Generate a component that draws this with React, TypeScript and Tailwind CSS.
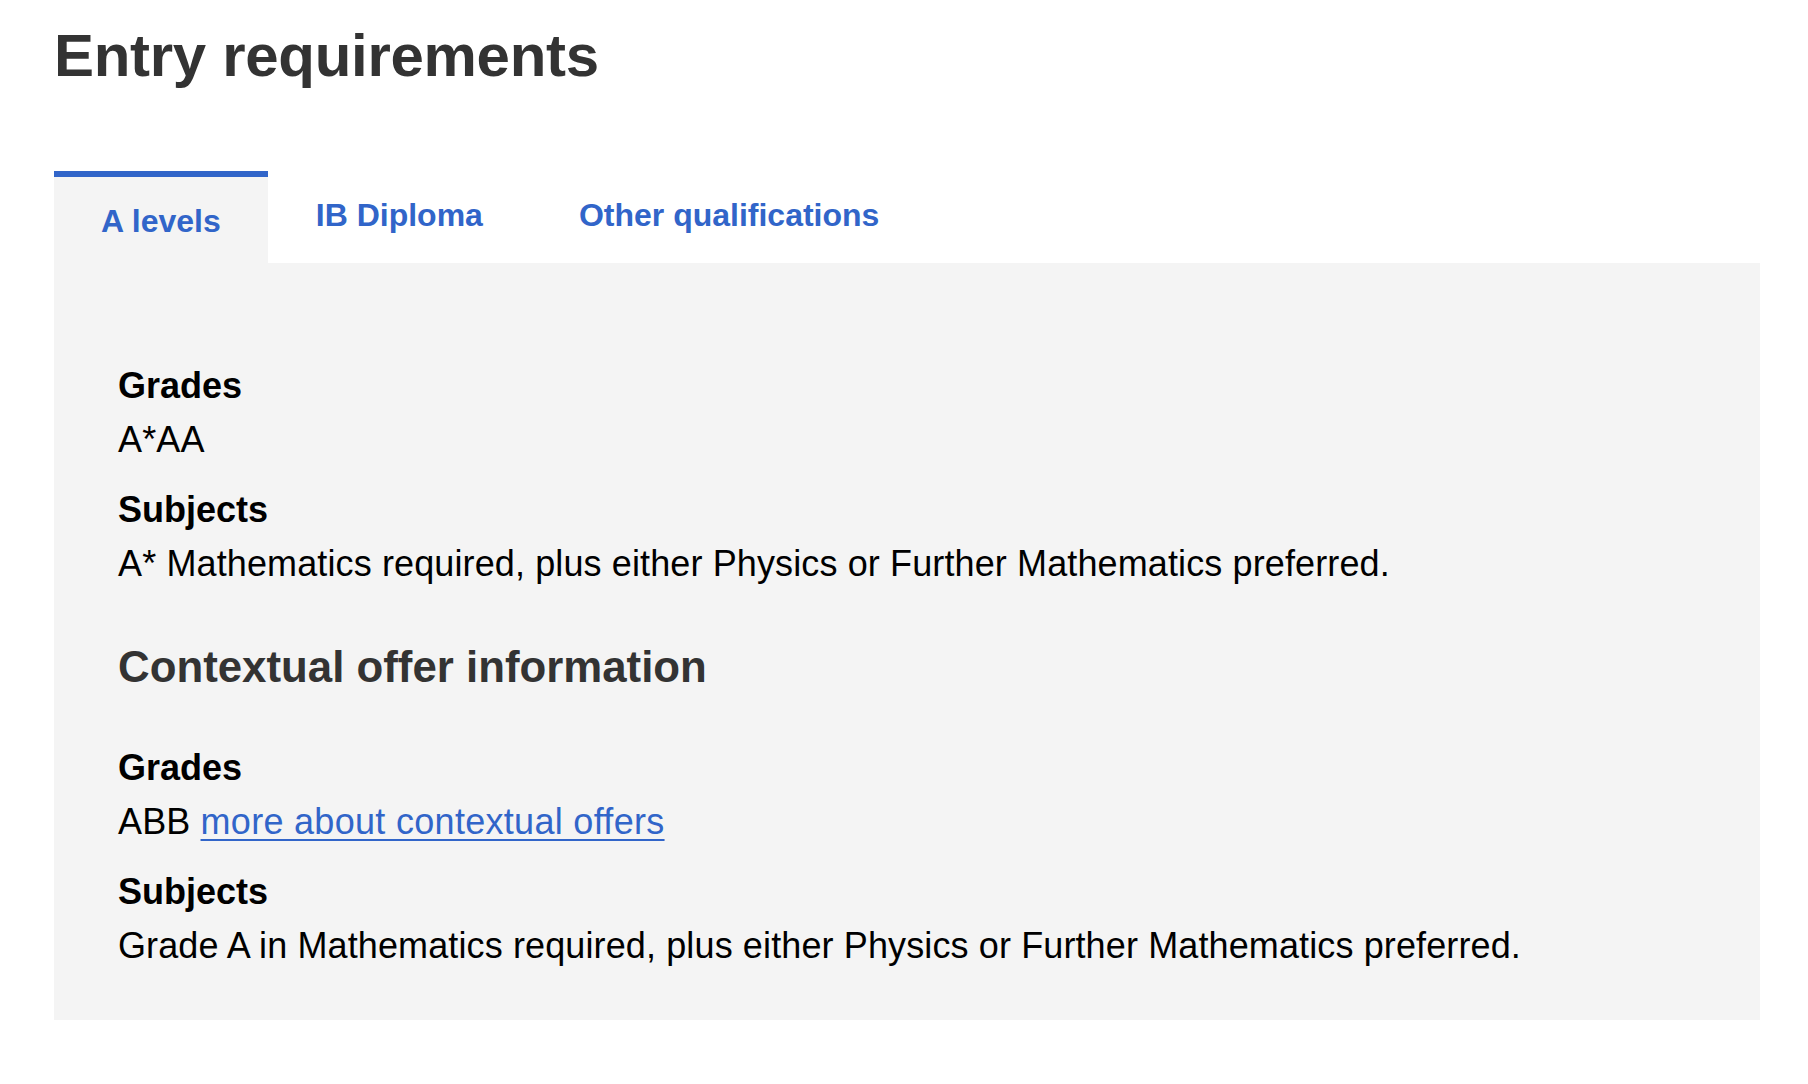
import React from "react";

const font = { fontFamily: '"Liberation Sans", Arial, Helvetica, sans-serif' };

function Tab({ label, active }: { label: string; active?: boolean }) {
  return active ? (
    <div className="border-t-[6px] border-[#3165c9] bg-[#f4f4f4] px-[47px] pt-6 pb-[22px] text-[32px] leading-[40px] font-bold text-[#3165c9]">
      {label}
    </div>
  ) : (
    <div className="px-12 pt-6 pb-[22px] text-[32px] leading-[40px] font-bold text-[#3165c9]">
      {label}
    </div>
  );
}

function Item({ term, children, first }: { term: string; children: React.ReactNode; first?: boolean }) {
  return (
    <div className={first ? "" : "mt-4"}>
      <dt className="text-[36px] leading-[54px] font-bold text-black">{term}</dt>
      <dd className="text-[36px] leading-[54px] tracking-[0.12px] text-black">{children}</dd>
    </div>
  );
}

export default function App() {
  return (
    <div className="min-h-[1084px] bg-white pl-[54px] pt-5" style={font}>
      <h1 className="text-[60px] leading-[72px] font-bold text-[#333333] tracking-[-0.3px]">
        Entry requirements
      </h1>
      <div className="mt-[79px] w-[1706px]">
        <div className="flex items-start">
          <Tab label="A levels" active />
          <Tab label="IB Diploma" />
          <Tab label="Other qualifications" />
        </div>
        <div className="bg-[#f4f4f4] pl-16 pt-24 pb-[47px]">
          <dl>
            <Item term="Grades" first>
              A*AA
            </Item>
            <Item term="Subjects">
              A* Mathematics required, plus either Physics or Further Mathematics preferred.
            </Item>
          </dl>
          <h2 className="mt-12 text-[43.8px] leading-[55px] font-bold text-[#333333]">
            Contextual offer information
          </h2>
          <dl className="mt-[47px]">
            <Item term="Grades" first>
              ABB{" "}
              <a href="#" className="text-[#3165c9] tracking-[0.3px] underline decoration-[2px] underline-offset-[5px]">
                more about contextual offers
              </a>
            </Item>
            <Item term="Subjects">
              Grade A in Mathematics required, plus either Physics or Further Mathematics preferred.
            </Item>
          </dl>
        </div>
      </div>
    </div>
  );
}
